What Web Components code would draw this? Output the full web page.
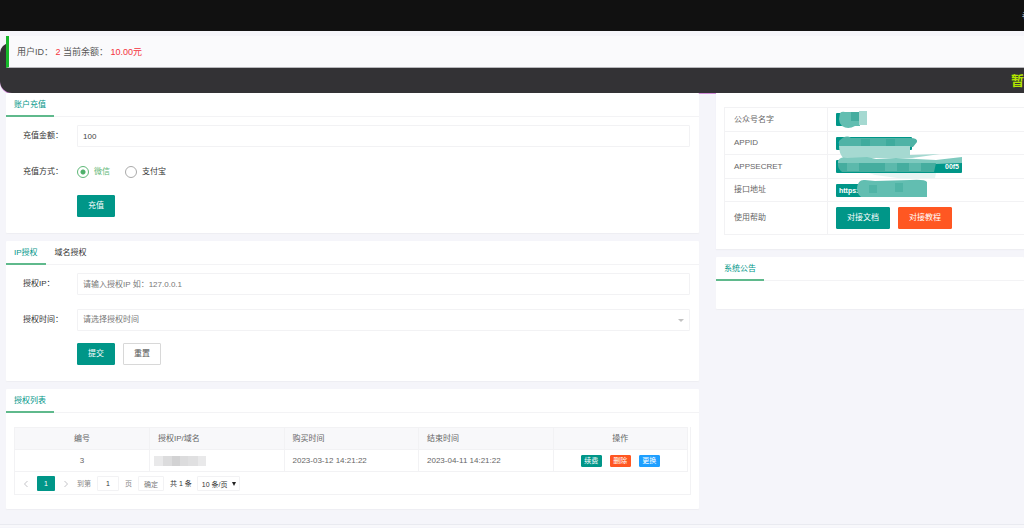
<!DOCTYPE html>
<html lang="zh-CN">
<head>
<meta charset="utf-8">
<title>授权管理</title>
<style>
  html { background: #f5f5fa; }
  body {
    margin: 0;
    overflow-x: hidden;
    font: 8px/16px "Liberation Sans", "Noto Sans CJK SC", sans-serif;
    color: #666;
    --green: #009688;
    --orange: #ff5722;
    --blue: #1e9fff;
    --line: #f2f2f4;
  }
</style>
</head>
<body>
<console-page></console-page>

<script>
const define = (name, html, setup) => {
  const template = document.createElement('template');
  template.innerHTML = html;
  customElements.define(name, class extends HTMLElement {
    connectedCallback() {
      if (this.shadowRoot) return;
      const root = this.attachShadow({ mode: 'open' });
      root.append(template.content.cloneNode(true));
      if (setup) setup(this, root);
    }
  });
};

/* Push button: kind = primary | plain | danger | info, size = normal | wide | mini */
define('ui-button', `
<style>
  :host { display: inline-flex; }
  button {
    font: inherit; line-height: 16px; margin: 0; padding: 0 10px; height: 22px; min-width: 38px;
    border: 1px solid var(--green); border-radius: 1px;
    background: var(--green); color: #fff; white-space: nowrap;
  }
  :host([kind=plain]) button { background: #fff; border-color: #d8d8d8; color: #555; }
  :host([kind=danger]) button { background: var(--orange); border-color: var(--orange); }
  :host([kind=info]) button { background: var(--blue); border-color: var(--blue); }
  :host([size=wide]) button { min-width: 54px; }
  :host([size=mini]) button { height: 12px; min-width: 21px; padding: 0; font-size: 7px; line-height: 10px; }
</style>
<button type="button"><slot></slot></button>`);

define('top-bar', `
<style>
  :host { display: flex; justify-content: flex-end; align-items: center; height: 31px; background: #111; overflow: hidden; }
  a { color: #ddd; text-decoration: none; margin-right: -6px; }
</style>
<a href="#">者</a>`);

define('account-banner', `
<style>
  :host { display: grid; padding-top: 5px; }
  .notice, .quote { grid-area: 1 / 1; }
  .notice {
    display: flex; align-items: flex-end; justify-content: flex-end; overflow: hidden;
    margin-top: 7px; height: 50px; box-sizing: border-box; padding-bottom: 4px;
    background: #333235; border-radius: 10px 0 0 12px; box-shadow: 0 1px 0 #d58fdc;
    color: #b4e600; font-size: 13px; font-weight: bold; line-height: 16px;
  }
  .quote {
    position: relative; align-self: start; height: 32px; line-height: 32px; box-sizing: border-box;
    margin-left: 6px; padding-left: 8px; border-left: 3px solid #16b82a; background: #fafafc;
    border-bottom: 1px solid #b8b8bc; font-size: 9px; color: #555;
  }
  b { font-weight: normal; color: #f5323c; }
</style>
<div class="notice"><span>暂</span></div>
<div class="quote">用户ID： <b>2</b> 当前余额： <b>10.00元</b></div>`);

/* White card with a row of tabs; tabs="first|second", the first one is active */
define('tab-card', `
<style>
  :host { display: block; position: relative; background: #fff; border-radius: 1px; box-shadow: 0 1px 1px #eeeef2; }
  nav { display: flex; gap: 1px; height: 24px; box-sizing: border-box; border-bottom: 1px solid #f3f3f5; }
  a { padding: 0 8px; height: 22px; line-height: 23px; color: #333; text-decoration: none; }
  a.on { color: var(--green); border-bottom: 2px solid #5fb98c; }
</style>
<nav></nav><slot></slot>`, (host, root) => {
  const nav = root.querySelector('nav');
  host.getAttribute('tabs').split('|').forEach((text, i) => {
    const a = document.createElement('a');
    a.href = '#';
    a.textContent = text;
    if (!i) a.className = 'on';
    nav.append(a);
  });
});

const formStyle = `
  form { display: flex; flex-direction: column; padding: 8px 9px 16px 17px; }
  .row { display: flex; align-items: center; height: 22px; margin-bottom: 14px; color: #333; }
  .row > label:first-child, .row > .name { flex: none; width: 54px; }
  .text {
    flex: 1; min-width: 0; height: 22px; box-sizing: border-box; margin: 0; padding: 0 5px;
    border: 1px solid var(--line); border-radius: 1px; background: #fff; font: inherit; color: #444; outline: 0;
  }
  .text::placeholder { color: #777; opacity: 1; }
  .actions { display: flex; gap: 8px; margin: -2px 0 0 54px; }
`;

define('recharge-form', `
<style>${formStyle}
  .choice { display: flex; align-items: center; gap: 5px; margin-right: 15px; }
  .choice input {
    appearance: none; width: 12px; height: 12px; margin: 0; box-sizing: border-box;
    border: 1px solid #aaa; border-radius: 50%; background: #fff;
  }
  .choice input:checked { border-color: #5fb878; background: radial-gradient(circle, #4fb06b 0 2px, #fff 3px); }
  .choice:has(:checked) { color: #5fb878; }
</style>
<form>
  <div class="row"><label for="amount">充值金额：</label><input class="text" id="amount" value="100"></div>
  <div class="row"><span class="name">充值方式：</span>
    <label class="choice"><input type="radio" name="pay" checked>微信</label>
    <label class="choice"><input type="radio" name="pay">支付宝</label>
  </div>
  <div class="actions"><ui-button>充值</ui-button></div>
</form>`);

define('grant-form', `
<style>${formStyle}
  .pick { flex: 1; display: grid; align-items: center; }
  .pick > * { grid-area: 1 / 1; }
  select.text { appearance: none; width: 100%; color: #777; }
  .pick i { justify-self: end; margin-right: 6px; border: 3px solid transparent; border-top-color: #c2c2c2; border-bottom: 0; pointer-events: none; }
</style>
<form>
  <div class="row"><label for="ip">授权IP：</label><input class="text" id="ip" placeholder="请输入授权IP 如：127.0.0.1"></div>
  <div class="row"><label for="time">授权时间：</label>
    <span class="pick"><select class="text" id="time"><option>请选择授权时间</option></select><i></i></span>
  </div>
  <div class="actions"><ui-button>提交</ui-button><ui-button kind="plain">重置</ui-button></div>
</form>`);

define('page-nav', `
<style>
  :host { display: flex; align-items: center; height: 23px; padding-left: 7px; font-size: 7px; color: #888; }
  svg { width: 8px; height: 8px; fill: none; stroke: #c4c4c8; }
  .now { width: 18px; height: 15px; line-height: 15px; margin: 0 7px; text-align: center; background: var(--green); color: #fff; text-decoration: none; border-radius: 1px; }
  label { display: flex; align-items: center; gap: 6px; margin-left: 7px; }
  input, button, select { height: 15px; box-sizing: border-box; margin: 0; padding: 0; border: 1px solid var(--line); border-radius: 1px; background: #fff; font: inherit; color: #333; text-align: center; }
  input { width: 22px; }
  button { width: 26px; margin: 0 6px; color: #777; }
  .total { color: #333; }
  .size { display: grid; align-items: center; margin-left: 5px; }
  .size > * { grid-area: 1 / 1; }
  select { appearance: none; width: 43px; padding-left: 4px; text-align: left; }
  .size i { justify-self: end; margin-right: 4px; border: 2px solid transparent; border-top: 4px solid #222; border-bottom: 0; pointer-events: none; }
</style>
<svg viewBox="0 0 8 8"><path d="M5.5 1 2.5 4l3 3"/></svg>
<a class="now" href="#">1</a>
<svg viewBox="0 0 8 8"><path d="M2.5 1l3 3-3 3"/></svg>
<label>到第 <input value="1"> 页</label>
<button type="button">确定</button>
<span class="total">共 1 条</span>
<span class="size"><select aria-label="每页条数"><option>10 条/页</option></select><i></i></span>`);

define('grant-list', `
<style>
  :host { display: block; padding: 14px 8px; }
  .frame { border: 1px solid var(--line); border-top: 0; padding-right: 2px; height: 67px; }
  table { width: 100%; border-collapse: collapse; table-layout: fixed; }
  th, td { padding: 0 8px; font-weight: normal; text-align: left; border-right: 1px solid var(--line); border-bottom: 1px solid var(--line); line-height: 21px; height: 21px; }
  thead th { background: #f8f8fa; border-top: 1px solid var(--line); }
  th.mid, td.mid { text-align: center; }
  .ops { display: flex; gap: 8px; justify-content: center; align-items: center; height: 21px; }
  td svg { display: block; width: 52px; height: 10px; margin-left: -4px; }
</style>
<div class="frame">
  <table>
    <thead><tr><th class="mid">编号</th><th>授权IP/域名</th><th>购买时间</th><th>结束时间</th><th class="mid">操作</th></tr></thead>
    <tbody><tr>
      <td class="mid">3</td>
      <td><svg viewBox="0 0 52 10" shape-rendering="crispEdges">
        <path fill="#e9e9ea" d="M0 0h52v10H0z"/><path fill="#dcdcdd" d="M9 0h9v10H9zM26 0h8v10h-8z"/>
        <path fill="#d2d2d3" d="M18 0h8v10h-8z"/><path fill="#e0e0e1" d="M34 0h10v10H34z"/></svg></td>
      <td>2023-03-12 14:21:22</td>
      <td>2023-04-11 14:21:22</td>
      <td class="mid"><div class="ops"><ui-button size="mini">续费</ui-button><ui-button size="mini" kind="danger">删除</ui-button><ui-button size="mini" kind="info">更换</ui-button></div></td>
    </tr></tbody>
  </table>
  <page-nav></page-nav>
</div>`);

define('api-info', `
<style>
  :host { display: block; position: relative; background: #fff; padding: 14px 0 14px 8px; box-shadow: 0 1px 1px #eeeef2; }
  table { width: 100%; border-collapse: collapse; table-layout: fixed; }
  th, td { height: 23px; padding: 0 8px; font-weight: normal; text-align: left; border: 1px solid var(--line); }
  th { width: 85px; padding-left: 9px; }
  td { border-right: 0; }
  tr:nth-child(even) > * { height: 22px; }
  tr:last-child > * { height: 32px; }
  .ops { display: flex; gap: 8px; }
  .tag {
    display: block; height: 13px; line-height: 13px; box-sizing: border-box; padding: 0 3px; border-radius: 1px;
    background: var(--green); color: #fff; font-size: 7px; font-weight: bold;
  }
  .w1 { width: 17px; } .w2 { width: 76px; } .w3 { width: 126px; text-align: right; } .w4 { width: 90px; }
  .smear { position: absolute; left: 109px; top: 12px; width: 150px; height: 95px; pointer-events: none; }
</style>
<table>
  <tr><th>公众号名字</th><td><span class="tag w1"></span></td></tr>
  <tr><th>APPID</th><td><span class="tag w2">w</span></td></tr>
  <tr><th>APPSECRET</th><td><span class="tag w3">00f5</span></td></tr>
  <tr><th>接口地址</th><td><span class="tag w4">https:</span></td></tr>
  <tr><th>使用帮助</th><td><div class="ops"><ui-button size="wide">对接文档</ui-button><ui-button size="wide" kind="danger">对接教程</ui-button></div></td></tr>
</table>
<svg class="smear" viewBox="0 0 150 95">
  <path fill="#62beb1" d="M15 8q2-2 5-1h15v14h-5q-7 4-13 0-3-3-3-7z"/>
  <path fill="#45ad9f" d="M26 7h8v9h-8z"/><path fill="#a5d9d1" d="M34 6h8v14h-8z"/>
  <path fill="#4fb3a6" d="M14 36q7-7 12-3h59q8 0 7 4l-4 5H14z"/>
  <path fill="#3fab9d" d="M36 34h9v7h-9zM61 34h9v7h-9z"/>
  <path fill="#a5d9d1" d="M14 41h71v9l30-1-28 4H18q-4-5-4-12z"/>
  <path fill="#7fcabf" d="M13 56q2-5 9-3l20-1 9 2 20-1 40 2 26-3v6l-27 1H13z"/>
  <path fill="#45ad9f" d="M13 58h98l-2 9H17q-5-4-4-9z"/>
  <path fill="#5cb9ac" d="M22 58h12v8H22zM60 58h12v8H60zM84 58h12v8H84z"/>
  <path fill="#e6f5f3" d="M44 68h67l-1 5-30 1-30-4z"/>
  <path fill="#62beb1" d="M32 83q1-9 8-8l10 1 35-1q15-1 17 2v15H36q-4-3-4-9z"/>
  <path fill="#50b4a6" d="M44 80h8v8h-8zM70 78h8v9h-8z"/>
</svg>`);

define('console-page', `
<style>
  :host { display: block; }
  main { display: grid; grid-template-columns: 9fr 4fr; gap: 17px; padding-left: 6px; align-items: start; }
  .column { display: flex; flex-direction: column; gap: 8px; min-width: 0; }
  .empty { height: 28px; }
  footer { margin-top: 15px; height: 3px; border-top: 1px solid #e9eaf0; background: #f8f8fb; box-sizing: border-box; }
</style>
<top-bar></top-bar>
<account-banner></account-banner>
<main>
  <div class="column">
    <tab-card tabs="账户充值"><recharge-form></recharge-form></tab-card>
    <tab-card tabs="IP授权|域名授权"><grant-form></grant-form></tab-card>
    <tab-card tabs="授权列表"><grant-list></grant-list></tab-card>
  </div>
  <div class="column">
    <api-info></api-info>
    <tab-card tabs="系统公告"><div class="empty"></div></tab-card>
  </div>
</main>
<footer></footer>`);
</script>
</body>
</html>
